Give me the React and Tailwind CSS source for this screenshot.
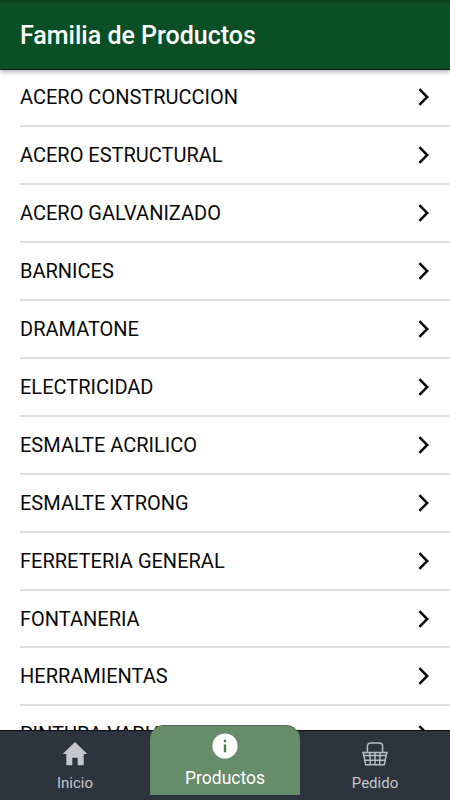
const families = [
  "ACERO CONSTRUCCION",
  "ACERO ESTRUCTURAL",
  "ACERO GALVANIZADO",
  "BARNICES",
  "DRAMATONE",
  "ELECTRICIDAD",
  "ESMALTE ACRILICO",
  "ESMALTE XTRONG",
  "FERRETERIA GENERAL",
  "FONTANERIA",
  "HERRAMIENTAS",
  "PINTURA VARIAS",
];

function Chevron() {
  return (
    <svg className="h-[18px] w-[12px]" viewBox="0 0 12 18" fill="none" stroke="#0a0a0a" strokeWidth="2.5">
      <path d="M1.4 1.2 9.2 9 1.4 16.8" />
    </svg>
  );
}

function HomeIcon() {
  return (
    <svg className="h-6 w-[26px]" viewBox="0 0 26 24" fill="#c5c6ca">
      <path d="M13 0 25.3 12h-3.6v11.2h-6v-7.4h-5.4v7.4h-6V12H.7z" />
    </svg>
  );
}

function InfoIcon() {
  return (
    <svg className="h-[26px] w-[26px]" viewBox="0 0 26 26">
      <circle cx="13" cy="13" r="12.6" fill="#fff" />
      <path d="M11.8 6.8h2.4v2.5h-2.4zM11.8 11.4h2.4v7.8h-2.4z" fill="#4f7c53" />
    </svg>
  );
}

function BasketIcon() {
  return (
    <svg className="h-6 w-7" viewBox="0 0 28 24" fill="none" stroke="#b9bcbf" strokeWidth="1.5">
      <path d="M6.4 10V4.5Q6.4 1 9.9 1h8.2q3.5 0 3.5 3.5V10" />
      <path d="M1.3 10.5h25.4M2 13.6h24" />
      <path d="M2.3 10.5l2.4 12.3h18.6l2.4-12.3M3.8 18.2h20.4M8.7 10.5l.7 12M14 10.5v12M19.3 10.5l-.7 12" />
    </svg>
  );
}

export default function App() {
  return (
    <div className="flex h-[800px] w-[450px] flex-col overflow-hidden bg-white font-['Roboto',sans-serif]">
      <header className="z-10 flex h-[70px] shrink-0 items-center border-b border-[#041b0d] bg-[#0b4f26] bg-linear-to-b from-[#083f1e] to-[#0b4f26] to-8% px-5 pt-[3px] shadow-[0_2px_5px_rgba(0,0,0,0.3)]">
        <h1 className="text-[25px] leading-8 font-medium text-white">Familia de Productos</h1>
      </header>
      <main className="min-h-0 flex-1 overflow-hidden pl-5">
        <ul className="-mt-[0.6px]">
          {families.map((name) => (
            <li key={name} className="flex h-[57.92px] items-center justify-between border-b-2 border-[#dedede] pr-5 text-[#0a0a0a]">
              <span className="text-[20px] leading-6">{name}</span>
              <Chevron />
            </li>
          ))}
        </ul>
      </main>
      <nav className="z-10 grid h-[70px] shrink-0 grid-cols-3 border-t border-[#0b0f15] bg-[#2d343e] text-[#c5c6ca]">
        <div className="flex flex-col items-center pt-[11px]">
          <HomeIcon />
          <span className="mt-[7px] text-[15px] leading-5">Inicio</span>
        </div>
        <div className="-mt-[6px] flex h-[70px] flex-col items-center rounded-t-[14px] border-t border-[#477549] bg-[#668c69] pt-[7px] text-white">
          <InfoIcon />
          <span className="mt-[9px] text-[17.5px] leading-5">Productos</span>
        </div>
        <div className="flex flex-col items-center pt-[11px]">
          <BasketIcon />
          <span className="mt-[7px] text-[15px] leading-5">Pedido</span>
        </div>
      </nav>
    </div>
  );
}
